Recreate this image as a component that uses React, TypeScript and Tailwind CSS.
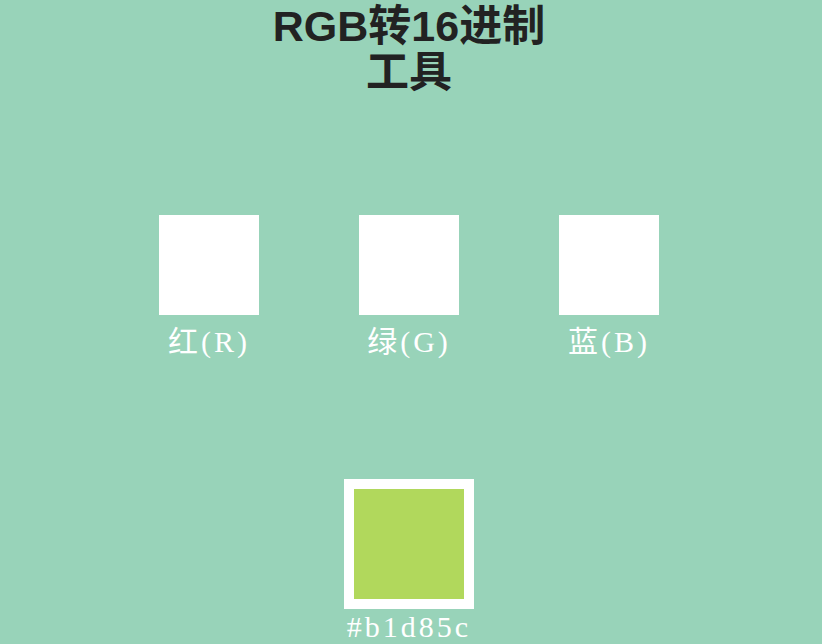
import React from 'react';

const channels = [
  { label: '红(R)' },
  { label: '绿(G)' },
  { label: '蓝(B)' },
];

export default function App() {
  const hex = '#b1d85c';
  return (
    <div className="min-h-[644px] w-full bg-[#98d3b9] overflow-hidden">
      <div className="w-[818px] flex flex-col items-center">
        <h1 className="w-[300px] pt-[3px] text-center text-[43px] leading-[46px] font-bold text-[#222] font-['Liberation_Sans','Noto_Sans_CJK_SC',sans-serif]">
          RGB转16进制工具
        </h1>

        <div className="mt-[120px] flex">
          {channels.map((c) => (
            <div key={c.label} className="w-[200px] flex flex-col items-center">
              <div className="w-[100px] h-[100px] bg-white" />
              <div className="mt-[7px] text-[30px] leading-[40px] tracking-[3px] text-white font-['Liberation_Serif','Noto_Sans_CJK_SC',serif]">
                {c.label}
              </div>
            </div>
          ))}
        </div>

        <div className="mt-[117px] flex flex-col items-center">
          <div className="w-[130px] h-[130px] border-[10px] border-white">
            <div className="w-full h-full" style={{ backgroundColor: hex }} />
          </div>
          <div className="text-[30px] leading-[36px] tracking-[3px] text-white font-['Liberation_Serif',serif]">{hex}</div>
        </div>
      </div>
    </div>
  );
}
